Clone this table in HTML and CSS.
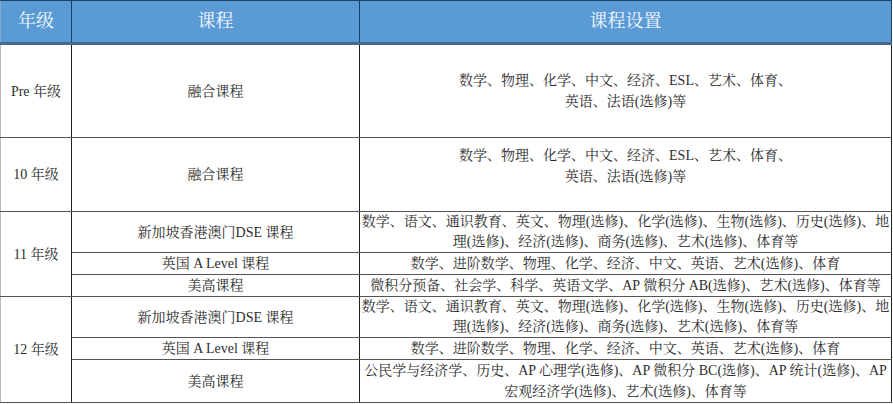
FILE: index.html
```html
<!DOCTYPE html>
<html lang="zh-CN">
<head>
<meta charset="utf-8">
<title>课程设置</title>
<link rel="stylesheet" href="styles.css">
</head>
<body>
<table class="course-table">
  <colgroup>
    <col class="col-grade">
    <col class="col-course">
    <col class="col-detail">
  </colgroup>
  <thead>
    <tr class="head-row">
      <th>年级</th>
      <th>课程</th>
      <th>课程设置</th>
    </tr>
  </thead>
  <tbody>
    <tr class="row-pre">
      <td class="grade">Pre 年级</td>
      <td class="course">融合课程</td>
      <td class="detail">数学、物理、化学、中文、经济、ESL、艺术、体育、<br>英语、法语(选修)等</td>
    </tr>
    <tr class="row-10">
      <td class="grade">10 年级</td>
      <td class="course">融合课程</td>
      <td class="detail raised">数学、物理、化学、中文、经济、ESL、艺术、体育、<br>英语、法语(选修)等</td>
    </tr>
    <tr class="row-two">
      <td class="grade" rowspan="3">11 年级</td>
      <td class="course">新加坡香港澳门DSE 课程</td>
      <td class="detail tight">数学、语文、通识教育、英文、物理(选修)、化学(选修)、生物(选修)、历史(选修)、地<br>理(选修)、经济(选修)、商务(选修)、艺术(选修)、体育等</td>
    </tr>
    <tr class="row-one">
      <td class="course">英国 A Level 课程</td>
      <td class="detail">数学、进阶数学、物理、化学、经济、中文、英语、艺术(选修)、体育</td>
    </tr>
    <tr class="row-one">
      <td class="course">美高课程</td>
      <td class="detail">微积分预备、社会学、科学、英语文学、AP 微积分 AB(选修)、艺术(选修)、体育等</td>
    </tr>
    <tr class="row-two">
      <td class="grade" rowspan="3">12 年级</td>
      <td class="course">新加坡香港澳门DSE 课程</td>
      <td class="detail tight">数学、语文、通识教育、英文、物理(选修)、化学(选修)、生物(选修)、历史(选修)、地<br>理(选修)、经济(选修)、商务(选修)、艺术(选修)、体育等</td>
    </tr>
    <tr class="row-one">
      <td class="course">英国 A Level 课程</td>
      <td class="detail">数学、进阶数学、物理、化学、经济、中文、英语、艺术(选修)、体育</td>
    </tr>
    <tr class="row-last">
      <td class="course">美高课程</td>
      <td class="detail">公民学与经济学、历史、AP 心理学(选修)、AP 微积分 BC(选修)、AP 统计(选修)、AP<br>宏观经济学(选修)、艺术(选修)、体育等</td>
    </tr>
  </tbody>
</table>
</body>
</html>
```
FILE: styles.css
```css
html, body {
  margin: 0;
  padding: 0;
  background: #ffffff;
}

.course-table {
  border-collapse: collapse;
  table-layout: fixed;
  width: 891px;
  font-family: "Liberation Serif", "Noto Serif CJK SC", "Noto Sans CJK SC", serif;
  color: #2e2e2e;
  font-size: 14px;
  line-height: 21px;
}

.col-grade { width: 71px; }
.col-course { width: 288px; }
.col-detail { width: 532px; }

.head-row {
  height: 43px;
}

.head-row th {
  background: #5b9bd5;
  color: #f4f8fc;
  font-weight: normal;
  font-size: 18px;
  border-top: 1px solid #1f3f60;
  border-left: 1px solid #1f3f60;
  border-right: 1px solid #1f3f60;
  border-bottom: 3px solid #45688c;
  padding: 0;
  vertical-align: middle;
}

.head-row th:first-child {
  border-left: 1px solid #8aa8c8;
}

td {
  border-left: 1px solid #202020;
  border-right: 1px solid #202020;
  border-top: 1px solid #555555;
  border-bottom: 1px solid #555555;
  padding: 0;
  text-align: center;
  vertical-align: middle;
  white-space: nowrap;
  overflow: hidden;
}

td.grade:first-child {
  border-left: 1px solid #b8b8b8;
}

.row-pre { height: 94px; }
.row-10 { height: 74px; }
.row-two { height: 41px; }
.row-one { height: 22px; }
.row-last { height: 43px; }

.detail.tight {
  line-height: 20px;
}

.detail.raised {
  padding-bottom: 18px;
}
```
